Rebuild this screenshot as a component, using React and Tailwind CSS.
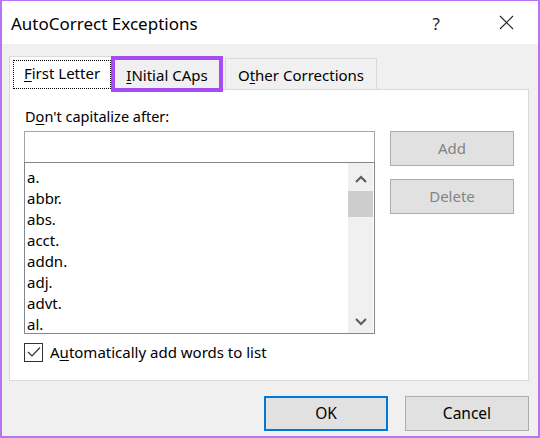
import React from "react";

const words = ["a.", "abbr.", "abs.", "acct.", "addn.", "adj.", "advt.", "al."];

function Chevron({ up }) {
  return (
    <svg width="12" height="8" viewBox="0 0 12 8" className="block">
      <polyline
        points={up ? "1,7 6,2 11,7" : "1,1 6,6 11,1"}
        fill="none"
        stroke="#606060"
        strokeWidth="2.2"
      />
    </svg>
  );
}

export default function App() {
  return (
    <div className="w-[540px] h-[438px] bg-[#f0f0f0] border-x-2 border-b-2 border-t border-[#b673f4] flex flex-col font-['Noto_Sans',sans-serif] text-black">
      {/* title bar */}
      <div className="h-[43px] bg-white flex items-center pl-[9px] shrink-0">
        <span className="text-[17px] leading-[20px] pt-[2px]">AutoCorrect Exceptions</span>
        <span className="ml-auto text-[17px] leading-[20px] pt-[2px] text-[#222]">?</span>
        <svg width="15" height="15" viewBox="0 0 15 15" className="ml-[59px] mr-[24px]">
          <path d="M1 1 L14 14 M14 1 L1 14" stroke="#222" strokeWidth="1.1" fill="none" />
        </svg>
      </div>

      <div className="pl-[7px]">
        {/* tabs */}
        <div className="h-[45px] flex items-start text-[15px] leading-[20px]">
          <div className="relative z-10 mt-[12px] w-[102px] h-[34px] bg-white border-l border-t border-[#d9d9d9] pl-[3px] pt-[3px]">
            <div className="h-[29px] border border-dotted border-black flex items-center justify-center pb-[3px]">
              <span><u className="underline-offset-2">F</u>irst Letter</span>
            </div>
          </div>
          <div className="relative z-10 mt-[12px] w-[112px] h-[36px] border-4 border-[#a64cf6] bg-[#f0f0f0] flex items-center justify-center pt-[1px]">
            <span><u className="underline-offset-2">I</u>Nitial CAps</span>
          </div>
          <div className="ml-[2px] mt-[14px] w-[152px] h-[31px] border-l border-t border-r border-[#d9d9d9] bg-[#f0f0f0] flex items-center justify-center pt-[1px]">
            <span>O<u className="underline-offset-2">t</u>her Corrections</span>
          </div>
        </div>

        {/* panel */}
        <div className="w-[520px] h-[292px] bg-white border border-[#d9d9d9] px-[14px] pt-[16px] text-[15px]">
          <div className="flex gap-[15px]">
            <div className="w-[351px]">
              <div className="leading-[20px] mb-[5px] pl-[1px] text-[14.5px]">
                D<u className="underline-offset-2">o</u>n't capitalize after:
              </div>
              <div className="h-[31px] bg-white border-x border-t border-[#a5a5a5]" />
              <div className="h-[172px] border border-[#828790] flex overflow-hidden">
                <div className="flex-1 pl-[2px] pt-[4px] leading-[21px]">
                  {words.map((w) => (
                    <div key={w}>{w}</div>
                  ))}
                </div>
                <div className="w-[25px] mr-[1px] bg-[#f0f0f0] flex flex-col">
                  <div className="h-[28px] flex items-center justify-center pt-[4px]">
                    <Chevron up />
                  </div>
                  <div className="h-[26px] bg-[#cdcdcd]" />
                  <div className="flex-1 flex items-end justify-center pb-[7px]">
                    <Chevron />
                  </div>
                </div>
              </div>
            </div>
            <div className="w-[124px] mt-[25px] flex flex-col gap-[13px]">
              <div className="h-[35px] bg-[#e1e1e1] border border-[#adadad] flex items-center justify-center text-[#838383]">
                Add
              </div>
              <div className="h-[35px] bg-[#e1e1e1] border border-[#adadad] flex items-center justify-center text-[#838383]">
                Delete
              </div>
            </div>
          </div>

          <div className="mt-[8px] flex items-center gap-[7px] leading-[20px]">
            <div className="w-[19px] h-[19px] border border-[#333] bg-white flex items-center justify-center">
              <svg width="14" height="12" viewBox="0 0 14 12">
                <polyline points="1,6 5,10 13,1.5" fill="none" stroke="#333" strokeWidth="1.2" />
              </svg>
            </div>
            <span>
              A<u className="underline-offset-2">u</u>tomatically add words to list
            </span>
          </div>
        </div>
      </div>

      {/* buttons */}
      <div className="mt-[15px] flex justify-end gap-[17px] pr-[9px] text-[15.5px]">
        <div className="w-[124px] h-[35px] bg-[#e1e1e1] border-2 border-[#0078d7] flex items-center justify-center">
          OK
        </div>
        <div className="w-[124px] h-[35px] bg-[#e1e1e1] border border-[#adadad] flex items-center justify-center">
          Cancel
        </div>
      </div>
    </div>
  );
}
